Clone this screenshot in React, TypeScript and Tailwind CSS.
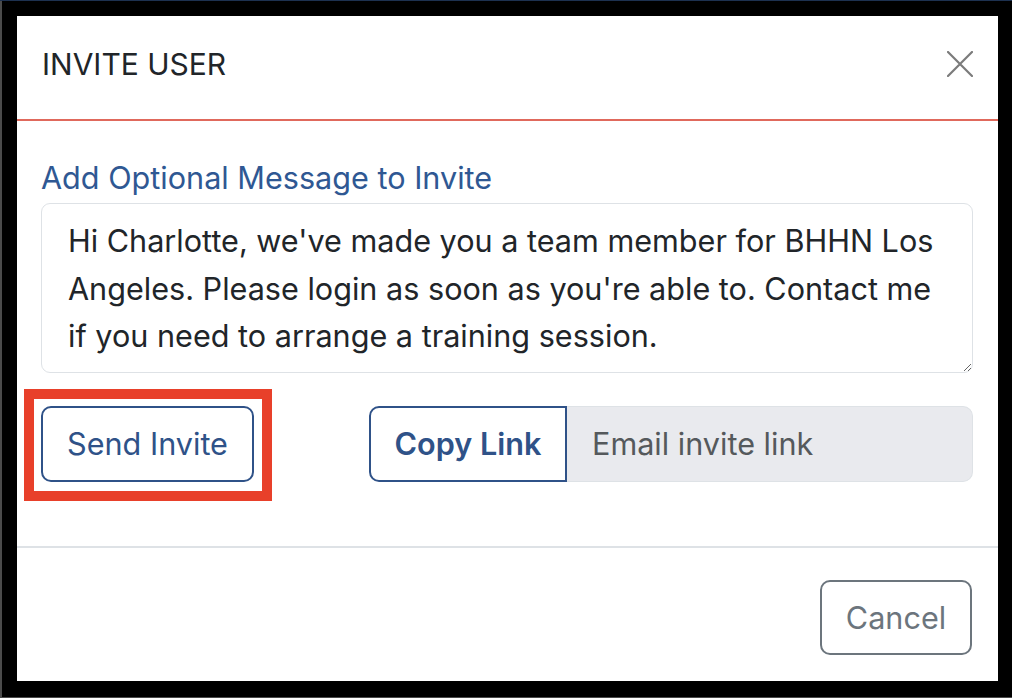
import { useState } from "react";

const MESSAGE =
  "Hi Charlotte, we've made you a team member for BHHN Los\nAngeles. Please login as soon as you're able to. Contact me\nif you need to arrange a training session.";

function CloseIcon() {
  return (
    <svg width="26" height="26" viewBox="0 0 26 26" fill="none">
      <path d="M1 1L25 25M25 1L1 25" stroke="#7b7b7b" strokeWidth="2.2" strokeLinecap="round" />
    </svg>
  );
}

export default function App() {
  const [message, setMessage] = useState(MESSAGE);

  return (
    <div className="flex h-[698px] w-[1012px] flex-col bg-black font-['Inter','Noto_Sans',sans-serif]">
      {/* page behind the screenshot */}
      <div className="h-[2px] bg-[#1d3150]" />
      <div className="flex flex-1">
        <div className="w-[2px] bg-[#4b4b4b]" />
        <div className="flex-1 pb-[16px] pl-[15px] pr-[14px] pt-[15px]">
          {/* modal */}
          <div className="flex h-[665px] flex-col bg-white">
            {/* header */}
            <div className="flex items-center justify-between border-b-2 border-[#e0695c] pb-[35px] pl-[25px] pr-[25px] pt-[28px]">
              <h5 className="text-[30px] leading-[40px] text-[#212529]">INVITE USER</h5>
              <button className="flex h-[40px] w-[40px] items-center justify-end">
                <CloseIcon />
              </button>
            </div>

            {/* body */}
            <div className="flex flex-col pl-[24px] pr-[25px] pt-[33px]">
              <label className="mb-[2px] text-[30.6px] leading-[47px] text-[#2f5893]">
                Add Optional Message to Invite
              </label>
              <textarea
                value={message}
                onChange={(e) => setMessage(e.target.value)}
                wrap="off"
                className="h-[170px] w-full overflow-hidden rounded-[9px] border border-[#dee2e6] px-[26px] pb-[12px] pt-[13px] text-[30.6px] leading-[47.5px] text-[#212529] outline-none"
              />

              <div className="mt-[33px] flex items-center justify-between">
                <div className="relative">
                  <button className="h-[76px] w-[213px] rounded-[10px] border-2 border-[#2f5288] text-[30.6px] text-[#2f5288]">
                    Send Invite
                  </button>
                  {/* highlight annotation */}
                  <div className="pointer-events-none absolute -left-[17px] -top-[17px] h-[112px] w-[248px] border-[10px] border-[#e8402a]" />
                </div>

                <div className="flex h-[76px] w-[604px]">
                  <button className="w-[198px] rounded-l-[10px] border-2 border-[#2f5288] text-[30.6px] font-semibold text-[#2f5288]">
                    Copy Link
                  </button>
                  <div className="flex flex-1 items-center rounded-r-[10px] border border-l-0 border-[#dee2e6] bg-[#e9eaee] pl-[25px] text-[30.6px] text-[#55595c]">
                    Email invite link
                  </div>
                </div>
              </div>
            </div>

            {/* footer */}
            <div className="mt-[64px] border-t-2 border-[#dee2e6]" />
            <div className="flex justify-end pr-[26px] pt-[32px]">
              <button className="h-[75px] w-[152px] rounded-[10px] border-2 border-[#6c757d] text-[30.6px] text-[#6c757d]">
                Cancel
              </button>
            </div>
          </div>
        </div>
      </div>
      <div className="h-[1px] bg-[#4b4b4b]" />
    </div>
  );
}
